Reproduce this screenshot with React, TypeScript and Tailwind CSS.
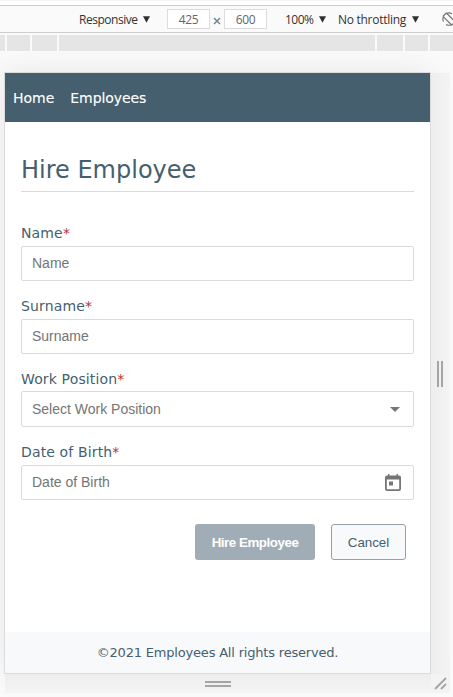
import type { ReactNode } from "react";

const verdana = "font-['DejaVu_Sans',sans-serif]";
const arial = "font-['Liberation_Sans',sans-serif]";

function Caret() {
  return (
    <svg width="7" height="7" viewBox="0 0 7 7" className="mr-px shrink-0">
      <path d="M0 0.3H7L3.5 6.8Z" fill="#303030" />
    </svg>
  );
}

function Toolbar() {
  return (
    <div className="flex h-[28px] shrink-0 items-center overflow-hidden whitespace-nowrap border-y border-[#cdcdcd] bg-[#fafafa] pl-[79px] font-['Open_Sans',sans-serif] text-[12px] text-[#333]">
      <span className="w-[64px] shrink-0 pt-px tracking-[-0.48px]">Responsive</span>
      <Caret />
      <span className="ml-[16px] flex h-[20px] w-[43px] shrink-0 items-center justify-center border border-[#dcdcdc] bg-white pt-px tracking-[-0.3px] text-[#666]">425</span>
      <svg width="8" height="8" viewBox="0 0 8 8" className="ml-[3px] mt-[4px] shrink-0">
        <path d="M1 1L7 7M7 1L1 7" stroke="#6e8792" strokeWidth="1.5" />
      </svg>
      <span className="ml-[3px] flex h-[20px] w-[43px] shrink-0 items-center justify-center border border-[#dcdcdc] bg-white pt-px tracking-[-0.3px] text-[#666]">600</span>
      <span className="ml-[18px] w-[34px] shrink-0 pt-px tracking-[-0.5px]">100%</span>
      <Caret />
      <span className="ml-[11px] w-[74px] shrink-0 pt-px tracking-[-0.28px]">No throttling</span>
      <Caret />
      <svg width="14" height="14" viewBox="0 0 14 14" className="ml-[22px] shrink-0" fill="none" stroke="#757575" strokeWidth="1.2">
        <path d="M1.5 9.5A6 6 0 0 1 1.5 4.5M4 1.8A6 6 0 0 1 10 1.8M12.5 4.5A6 6 0 0 1 12.5 9.5M10 12.4A6 6 0 0 1 4 12.4" />
        <rect x="4.6" y="0.8" width="4.8" height="12.4" rx="0.8" transform="rotate(-45 7 7)" />
      </svg>
    </div>
  );
}

function Ruler() {
  return (
    <div className="mt-[2px] flex h-[16px] shrink-0 gap-[2px] bg-[#fafafa]">
      <i className="w-[5px] bg-[#e5e5e5]" />
      <i className="w-[23px] bg-[#e5e5e5]" />
      <i className="w-[25px] bg-[#e5e5e5]" />
      <i className="w-[316px] bg-[#e5e5e5]" />
      <i className="w-[26px] bg-[#e5e5e5]" />
      <i className="w-[23px] bg-[#e5e5e5]" />
      <i className="flex-1 bg-[#e5e5e5]" />
    </div>
  );
}

function Field({ label, placeholder, height, className, labelClass = "h-[21px]", children }: { label: string; placeholder: string; height: string; className: string; labelClass?: string; children?: ReactNode }) {
  return (
    <div className={className}>
      <div className={`${verdana} ${labelClass} text-[14px] leading-[17px] tracking-[0.14px] text-[#455f6f]`}>
        {label}<span className="text-[#b83232]">*</span>
      </div>
      <div className={`${height} ${arial} flex items-center justify-between rounded-[2px] border border-[#dadada] bg-white px-[10px] text-[14px] text-[#757575]`}>
        <span>{placeholder}</span>
        {children}
      </div>
    </div>
  );
}

function Device() {
  return (
    <div className="relative z-10 flex h-[602px] w-[427px] shrink-0 flex-col border border-[#dcdcdc] bg-white shadow-[0_0_30px_rgba(0,0,0,0.08)]">
      <nav className={`${verdana} flex h-[49px] shrink-0 items-center gap-[16px] bg-[#455f6f] px-[8px] pt-[2px] text-[14px] text-white [-webkit-text-stroke:0.1px_white]`}>
        <a>Home</a>
        <a className="tracking-[-0.08px]">Employees</a>
      </nav>
      <main className="flex flex-1 flex-col px-[16px]">
        <h1 className={`${verdana} mt-[30px] h-[40px] border-b border-[#dadada] text-[24px] leading-[36px] text-[#455f6f]`}>Hire Employee</h1>
        <Field className="mt-[33px]" height="h-[35px]" label="Name" placeholder="Name" />
        <Field className="mt-[17px]" height="h-[35px]" label="Surname" placeholder="Surname" />
        <Field className="mt-[17px]" labelClass="h-[20px]" height="h-[36px]" label="Work Position" placeholder="Select Work Position">
          <svg width="10" height="5" viewBox="0 0 10 5" className="mr-[3px]">
            <path d="M0 0H10L5 5Z" fill="#757575" />
          </svg>
        </Field>
        <Field className="mt-[17px]" height="h-[35px]" label="Date of Birth" placeholder="Date of Birth">
          <svg width="20" height="20" viewBox="0 0 20 20" fill="#757575">
            <path fillRule="evenodd" d="M4 2.500h1V1h1.500v1.500h7V1h1.500v1.500h1A2 2 0 0 1 18 4.500V16a2 2 0 0 1-2 2H4a2 2 0 0 1-2-2V4.500a2 2 0 0 1 2-2zM3.800 6.500v9.700h12.400V6.500zM6 8.500h4v4H6z" />
          </svg>
        </Field>
        <div className={`${arial} mt-[24px] flex justify-end gap-[16px] pr-[8px] text-[13.333px]`}>
          <button className="h-[36px] w-[120px] whitespace-nowrap rounded-[3px] bg-[#a1adb6] pt-px font-bold tracking-[-0.45px] text-white">Hire Employee</button>
          <button className="h-[36px] w-[75px] rounded-[3px] border border-[#94a1ab] bg-[#f8f9fb] pt-px text-[#455f6f]">Cancel</button>
        </div>
      </main>
      <footer className={`${verdana} flex h-[41px] shrink-0 items-center justify-center bg-[#f8f9fb] text-[13px] tracking-[-0.19px] text-[#455f6f]`}>
        <span>©2021 Employees All rights reserved.</span>
      </footer>
    </div>
  );
}

export default function App() {
  return (
    <div className="flex h-[697px] w-[453px] flex-col overflow-hidden bg-[#fafafa]">
      <div className="h-[5px] shrink-0 border-t border-[#f3f3f3] bg-white" />
      <Toolbar />
      <Ruler />
      <div className="flex flex-1 flex-col overflow-hidden pl-[4px] pt-[21px]">
        <div className="flex">
          <Device />
          <div className="relative z-20 mt-px flex h-[601px] w-[19px] shrink-0 items-center justify-center gap-[2px] bg-gradient-to-r from-[#ededed] to-[#f4f4f4] pr-px">
            <i className="h-[26px] w-[2px] bg-[#a5a5a5]" />
            <i className="h-[26px] w-[2px] bg-[#a5a5a5]" />
          </div>
        </div>
        <div className="relative z-20 ml-px flex h-[19px] w-[445px] shrink-0 bg-gradient-to-b from-[#ededed] to-[#f4f4f4]">
          <div className="flex w-[426px] flex-col items-center justify-center gap-[2px] pt-px">
            <i className="h-[2px] w-[26px] bg-[#a5a5a5]" />
            <i className="h-[2px] w-[26px] bg-[#a5a5a5]" />
          </div>
          <div className="flex w-[19px] items-center justify-center bg-[#f3f3f3] pb-px pr-px">
            <svg width="13" height="13" viewBox="0 0 13 13" stroke="#a5a5a5" strokeWidth="1.8">
              <path d="M1 12L12 1M7 12L12 7" />
            </svg>
          </div>
        </div>
      </div>
    </div>
  );
}
